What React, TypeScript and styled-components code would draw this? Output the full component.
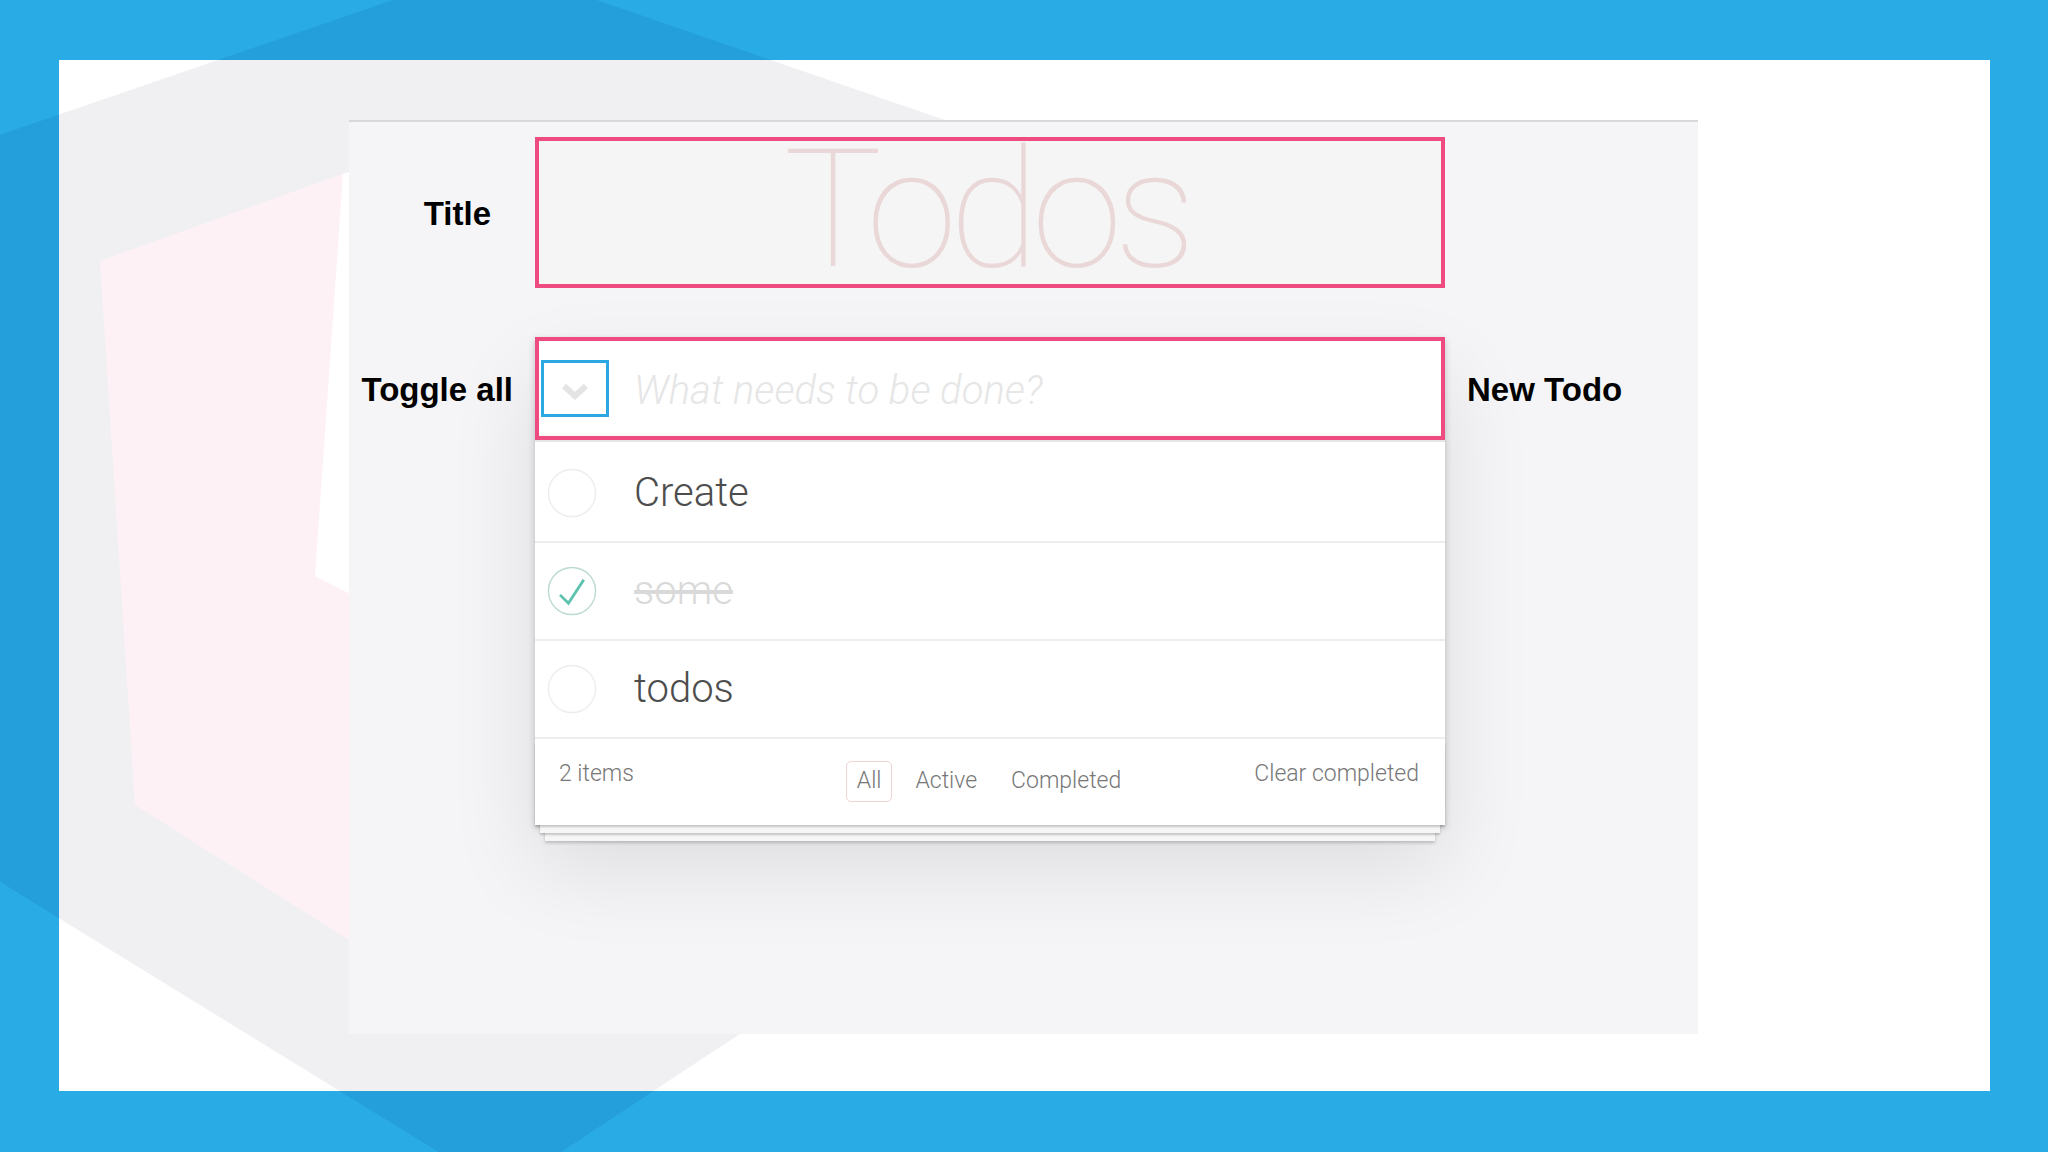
import styled, { createGlobalStyle } from "styled-components";

const GlobalStyle = createGlobalStyle`
  html, body {
    margin: 0;
    padding: 0;
    background: #29abe5;
  }
  * {
    box-sizing: border-box;
  }
`;

// big hexagon drawn behind the page, in page coordinates
const HEX = "495,-35 1200,208 1200,730 502,1191 -779,402";

const Frame = styled.div`
  position: relative;
  width: 2048px;
  height: 1152px;
  padding: 60px 58px 61px 59px;
  display: flex;
  overflow: hidden;
  background: #29abe5;
`;

const Backdrop = styled.svg`
  position: absolute;
  inset: 0;
  width: 100%;
  height: 100%;
  pointer-events: none;
`;

const WhitePanel = styled.div`
  position: relative;
  flex: 1;
  display: flex;
  align-items: flex-start;
  padding: 60px 0 0 290px;
  background: #ffffff;
  overflow: hidden;
`;

const AppPanel = styled.main`
  position: relative;
  width: 1349px;
  height: 914px;
  padding-top: 15px;
  border-top: 2px solid #d8d8da;
  background: #f5f5f7;
  display: grid;
  grid-template-columns: 186px 910px 1fr;
  row-gap: 49px;
  align-items: start;
  align-content: start;
`;

const FieldLabel = styled.div<{ $side: "left" | "right"; $gap: number; $height: number }>`
  height: ${(p) => p.$height}px;
  padding-top: 3px;
  display: flex;
  align-items: center;
  justify-self: ${(p) => (p.$side === "left" ? "end" : "start")};
  ${(p) => (p.$side === "left" ? `margin-right: ${p.$gap}px;` : `margin-left: ${p.$gap}px;`)}
  font-family: "Liberation Sans", Arial, sans-serif;
  font-weight: 700;
  font-size: 33px;
  color: #000;
  white-space: nowrap;
`;

const TitleBox = styled.header`
  height: 151px;
  border: 4px solid #ee4c81;
  background: #f5f5f5;
  display: flex;
  justify-content: center;
  align-items: center;
`;

const Heading = styled.h1`
  margin: -6px 0 0 -8px;
  font-family: Roboto, "Helvetica Neue", sans-serif;
  font-weight: 100;
  font-size: 165px;
  line-height: 1;
  letter-spacing: -8px;
  color: rgba(175, 47, 47, 0.15);
`;

const Card = styled.section`
  position: relative;
  background: #fff;
  box-shadow: 0 3px 7px rgba(0, 0, 0, 0.2), 0 41px 83px rgba(0, 0, 0, 0.1);
  font-family: Roboto, "Helvetica Neue", sans-serif;
  font-weight: 300;
`;

const NewTodoRow = styled.div`
  height: 103px;
  border: 4px solid #ee4c81;
  display: flex;
  align-items: center;
  box-shadow: inset 0 -3px 2px rgba(0, 0, 0, 0.03);
`;

const ToggleAll = styled.button`
  width: 68px;
  height: 57px;
  margin-left: 2px;
  padding: 6px 0 0;
  border: 3px solid #2ba7e1;
  background: transparent;
  display: flex;
  align-items: center;
  justify-content: center;
`;

const NewTodoInput = styled.input`
  flex: 1;
  margin: 3px 0 0 25px;
  padding: 0;
  border: none;
  outline: none;
  background: transparent;
  font-family: Roboto, "Helvetica Neue", sans-serif;
  font-size: 40px;
  font-style: italic;
  font-weight: 300;
  color: #4d4d4d;

  &::placeholder {
    color: #e6e6e6;
    font-style: italic;
    font-weight: 300;
  }
`;

const TodoList = styled.ul`
  margin: 0;
  padding: 3px 0 0;
  list-style: none;
  border-top: 2px solid #e6e6e6;
`;

const TodoRow = styled.li`
  height: 98px;
  display: flex;
  align-items: center;
  border-bottom: 2px solid #ededed;
`;

const ToggleMark = styled.svg`
  margin-left: 12px;
  flex: none;
`;

const TodoText = styled.label<{ $done: boolean }>`
  margin-left: 37px;
  font-size: 40px;
  line-height: 1.2;
  color: ${(p) => (p.$done ? "#d9d9d9" : "#4d4d4d")};
  text-decoration: ${(p) => (p.$done ? "line-through" : "none")};
`;

const Footer = styled.footer`
  position: relative;
  height: 86px;
  padding: 0 26px 0 24px;
  display: grid;
  grid-template-columns: 1fr auto 1fr;
  align-items: start;
  font-size: 23px;
  color: #777;

  &::before {
    content: "";
    position: absolute;
    left: 0;
    right: 0;
    bottom: 0;
    height: 83px;
    pointer-events: none;
    box-shadow: 0 2px 2px rgba(0, 0, 0, 0.2), 0 13px 0 -5px #f6f6f6,
      0 15px 2px -5px rgba(0, 0, 0, 0.2), 0 26px 0 -10px #f6f6f6,
      0 28px 3px -10px rgba(0, 0, 0, 0.2);
  }
`;

const Count = styled.span`
  margin-top: 18px;
  line-height: 33px;
`;

const Filters = styled.ul`
  margin: 22px 0 0;
  padding: 0;
  list-style: none;
  display: flex;
  gap: 12px;
`;

const FilterLink = styled.a<{ $selected: boolean }>`
  display: block;
  height: 41px;
  padding: 0 10px;
  line-height: 38px;
  border: 1.5px solid ${(p) => (p.$selected ? "rgba(175, 47, 47, 0.2)" : "transparent")};
  border-radius: 5px;
  color: inherit;
  text-decoration: none;
`;

const ClearButton = styled.button`
  justify-self: end;
  margin-top: 18px;
  padding: 0;
  border: none;
  background: none;
  font: inherit;
  line-height: 33px;
  color: inherit;
`;

const todos = [
  { title: "Create", done: false },
  { title: "some", done: true },
  { title: "todos", done: false },
];

const filters = ["All", "Active", "Completed"];

const ToggleIcon = ({ done }: { done: boolean }) => (
  <ToggleMark width="50" height="50" viewBox="-2 -2 104 104">
    <circle
      cx="50"
      cy="50"
      r="49"
      fill="none"
      stroke={done ? "#bddad5" : "#ededed"}
      strokeWidth="3"
    />
    {done && <path fill="#5dc2af" d="M72 25L42 71 27 56l-4 4 20 20 34-52z" />}
  </ToggleMark>
);

const Chevron = () => (
  <svg width="28" height="18" viewBox="0 0 28 18">
    <polyline points="3,3 14,13 25,3" fill="none" stroke="#e4e4e4" strokeWidth="6" />
  </svg>
);

const App = () => {
  const left = todos.filter((t) => !t.done).length;
  return (
    <>
      <GlobalStyle />
      <Frame>
        <Backdrop viewBox="0 0 2048 1152" preserveAspectRatio="none">
          <polygon points={HEX} fill="#249fdb" />
        </Backdrop>
        <WhitePanel>
          <Backdrop viewBox="59 60 1931 1031" preserveAspectRatio="none">
            <polygon points={HEX} fill="#f0f0f3" />
            <polygon points="100,261 460,132 460,1010 135,805" fill="#fdf1f6" />
            <polygon points="343,174 460,132 460,650 315,576" fill="#ffffff" />
          </Backdrop>
          <AppPanel>
            <FieldLabel $side="left" $gap={44} $height={151}>
              Title
            </FieldLabel>
            <TitleBox>
              <Heading>Todos</Heading>
            </TitleBox>
            <div />

            <FieldLabel $side="left" $gap={22} $height={103}>
              Toggle all
            </FieldLabel>
            <Card>
              <NewTodoRow>
                <ToggleAll aria-label="Toggle all">
                  <Chevron />
                </ToggleAll>
                <NewTodoInput placeholder="What needs to be done?" />
              </NewTodoRow>
              <TodoList>
                {todos.map((todo) => (
                  <TodoRow key={todo.title}>
                    <ToggleIcon done={todo.done} />
                    <TodoText $done={todo.done}>{todo.title}</TodoText>
                  </TodoRow>
                ))}
              </TodoList>
              <Footer>
                <Count>{left} items</Count>
                <Filters>
                  {filters.map((f) => (
                    <li key={f}>
                      <FilterLink href="#" $selected={f === "All"}>
                        {f}
                      </FilterLink>
                    </li>
                  ))}
                </Filters>
                <ClearButton>Clear completed</ClearButton>
              </Footer>
            </Card>
            <FieldLabel $side="right" $gap={22} $height={103}>
              New Todo
            </FieldLabel>
          </AppPanel>
        </WhitePanel>
      </Frame>
    </>
  );
};

export default App;
